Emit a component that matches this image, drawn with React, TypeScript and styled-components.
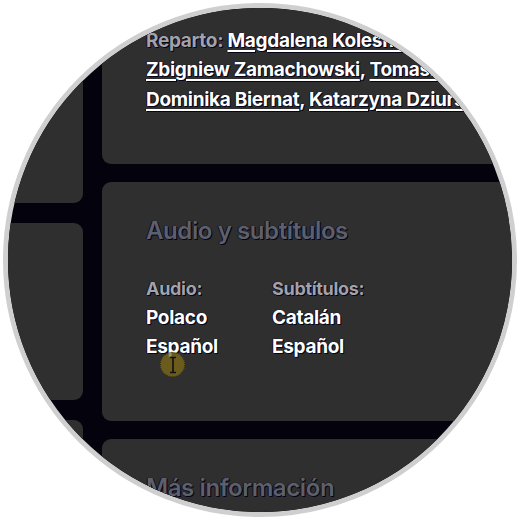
import React from 'react'
import styled, { createGlobalStyle } from 'styled-components'

const GlobalStyle = createGlobalStyle`
  body {
    margin: 0;
    background: #ffffff;
    font-family: Inter, "Liberation Sans", sans-serif;
  }
`

const Page = styled.div`
  width: 520px;
  height: 520px;
  padding: 3px;
  box-sizing: border-box;
`

const Lens = styled.div`
  position: relative;
  width: 514px;
  height: 514px;
  box-sizing: border-box;
  border: 5px solid #cfcfcf;
  border-radius: 50%;
  overflow: hidden;
  background: #03020d;
`

const Screen = styled.div`
  display: flex;
  gap: 19px;
  margin-top: -100px;
`

const SideColumn = styled.div`
  display: flex;
  flex-direction: column;
  gap: 20px;
  flex: none;
  width: 120px;
  margin-left: -45px;
`

const MainColumn = styled.div`
  display: flex;
  flex-direction: column;
  gap: 18px;
  flex: none;
  width: 600px;
`

const Card = styled.section<{ $height: number }>`
  flex: none;
  height: ${(p) => p.$height}px;
  box-sizing: border-box;
  background: #2f2f2f;
  border-radius: 9px;
`

const CastCard = styled(Card)`
  display: flex;
  flex-direction: column;
  justify-content: flex-end;
  padding: 0 44px 50px;
`

const InfoCard = styled(Card)`
  padding: 34px 44px 0;
`

const outline = `
  text-shadow: 0 0 1px #05051a, 1px 1px 0 #05051a, -1px 0 0 rgba(5, 5, 26, 0.6);
`

const CastLine = styled.div`
  font-size: 19px;
  line-height: 29.5px;
  font-weight: 700;
  color: #ffffff;
  white-space: nowrap;
  letter-spacing: -0.3px;
  ${outline}
`

const Label = styled.span`
  color: #a2a2a8;
`

const Name = styled.a`
  color: #ffffff;
  text-decoration: underline;
  text-decoration-thickness: 2px;
  text-underline-offset: 3px;
  cursor: pointer;
`

const Heading = styled.h2`
  margin: 0;
  font-size: 24px;
  line-height: 30px;
  font-weight: 600;
  color: #5d606b;
  letter-spacing: -0.4px;
  ${outline}
`

const LangGrid = styled.div`
  display: grid;
  grid-template-columns: 126px 126px;
  margin-top: 28px;
`

const LangList = styled.div`
  display: flex;
  flex-direction: column;
`

const ListTitle = styled.div`
  font-size: 18px;
  line-height: 29px;
  font-weight: 700;
  color: #a2a2a8;
  letter-spacing: -0.3px;
  ${outline}
`

const ListItem = styled.div`
  font-size: 19px;
  line-height: 29px;
  font-weight: 700;
  color: #ffffff;
  letter-spacing: -0.3px;
  ${outline}
`

const Cursor = styled.div`
  position: absolute;
  left: 152px;
  top: 344px;
  width: 23px;
  height: 23px;
  border-radius: 50%;
  background: rgba(128, 108, 24, 0.75);
  border: 1px dotted rgba(0, 0, 0, 0.5);
  display: flex;
  align-items: center;
  justify-content: center;
`

const languages = [
  { title: 'Audio:', items: ['Polaco', 'Español'] },
  { title: 'Subtítulos:', items: ['Catalán', 'Español'] },
]

export default function App() {
  return (
    <Page>
      <GlobalStyle />
      <Lens>
        <Screen>
          <SideColumn>
            <Card $height={295} />
            <Card $height={177} />
            <Card $height={200} />
          </SideColumn>
          <MainColumn>
            <CastCard $height={256}>
              <CastLine>
                <Label>Reparto: </Label>
                <Name>Magdalena Koleśnik</Name>, <Name>Julian Świeżewski</Name>
              </CastLine>
              <CastLine>
                <Name>Zbigniew Zamachowski</Name>, <Name>Tomasz Orpiński</Name>
              </CastLine>
              <CastLine>
                <Name>Dominika Biernat</Name>, <Name>Katarzyna Dziurska</Name>
              </CastLine>
            </CastCard>
            <InfoCard $height={239}>
              <Heading>Audio y subtítulos</Heading>
              <LangGrid>
                {languages.map((l) => (
                  <LangList key={l.title}>
                    <ListTitle>{l.title}</ListTitle>
                    {l.items.map((item) => (
                      <ListItem key={item}>{item}</ListItem>
                    ))}
                  </LangList>
                ))}
              </LangGrid>
            </InfoCard>
            <InfoCard $height={200}>
              <Heading>Más información</Heading>
            </InfoCard>
          </MainColumn>
        </Screen>
        <Cursor>
          <svg width="10" height="18" viewBox="0 0 10 18">
            <path
              d="M2 1.5h6M5 1.5v15M2 16.5h6"
              stroke="#111"
              strokeWidth="1.6"
              fill="none"
            />
          </svg>
        </Cursor>
      </Lens>
    </Page>
  )
}
